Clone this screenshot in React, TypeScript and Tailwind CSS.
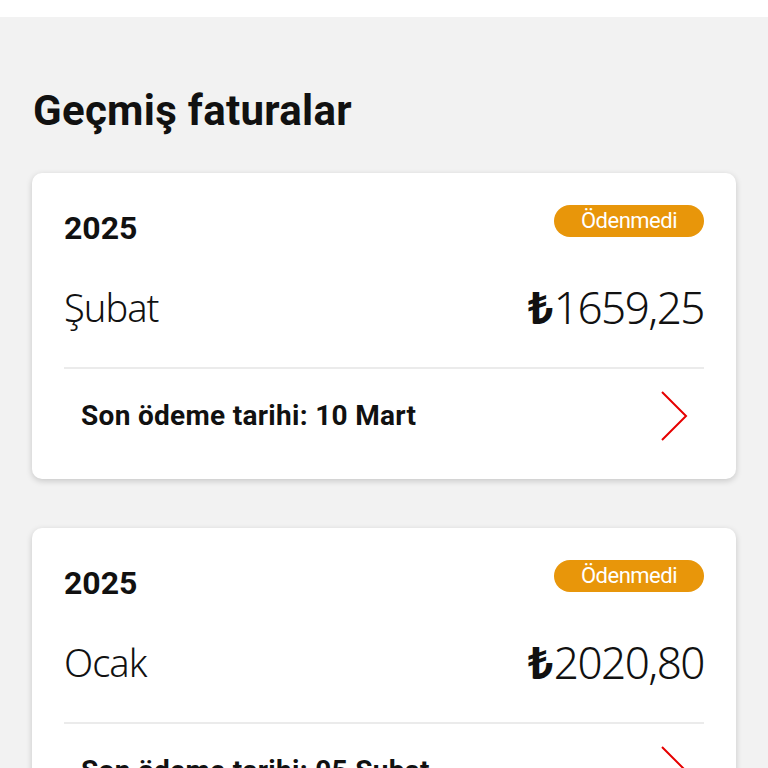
import React from 'react';

type Bill = {
  year: string;
  month: string;
  amount: string;
  due: string;
};

const bills: Bill[] = [
  { year: '2025', month: 'Şubat', amount: '1659,25', due: 'Son ödeme tarihi: 10 Mart' },
  { year: '2025', month: 'Ocak', amount: '2020,80', due: 'Son ödeme tarihi: 05 Şubat' },
];

const Chevron = () => (
  <svg width="28" height="50" viewBox="0 0 28 50" fill="none">
    <path d="M2 1 L26 25 L2 49" stroke="#e60000" strokeWidth="2" strokeLinejoin="miter" />
  </svg>
);

const BillCard = ({ bill }: { bill: Bill }) => (
  <div className="bg-white rounded-[10px] shadow-[0_2px_6px_rgba(0,0,0,0.18)] px-[32px] pt-[32px]">
    <div className="flex justify-between items-start h-[56px]">
      <span className="font-['Roboto'] font-bold text-[32px] leading-[48px] text-[#111] mt-[-1px]">{bill.year}</span>
      <span className="bg-[#e8960a] text-white rounded-full w-[150px] h-[32px] flex items-center justify-center font-['Roboto'] text-[22px] leading-none tracking-[-0.5px]">
        Ödenmedi
      </span>
    </div>
    <div className="flex justify-between items-center h-[106px] pb-[14px]">
      <span className="font-['Noto_Sans'] font-light text-[38px] text-[#111] tracking-[-1px]">{bill.month}</span>
      <span className="font-['Noto_Sans'] font-light text-[44px] text-[#111] tracking-[-1.5px] flex items-center">
        <span className="font-bold mr-[2px]">₺</span>
        {bill.amount}
      </span>
    </div>
    <div className="h-[2px] bg-[#ebebeb]" />
    <div className="flex justify-between items-center h-[110px] pb-[16px]">
      <span className="font-['Roboto'] font-bold text-[28px] tracking-[0.3px] text-[#111] pl-[17px]">{bill.due}</span>
      <span className="mr-[16px]">
        <Chevron />
      </span>
    </div>
  </div>
);

export default function App() {
  return (
    <div className="w-[768px] h-[768px] overflow-hidden bg-[#f2f2f2]">
      <div className="h-[17px] bg-white" />
      <div className="px-[32px] pt-[70px]">
        <h1 className="font-['Roboto'] font-bold text-[42px] leading-[48px] tracking-[0.3px] text-[#111] pl-[1px]">Geçmiş faturalar</h1>
        <div className="mt-[38px] flex flex-col gap-[49px]">
          {bills.map((b) => (
            <BillCard key={b.month} bill={b} />
          ))}
        </div>
      </div>
    </div>
  );
}
